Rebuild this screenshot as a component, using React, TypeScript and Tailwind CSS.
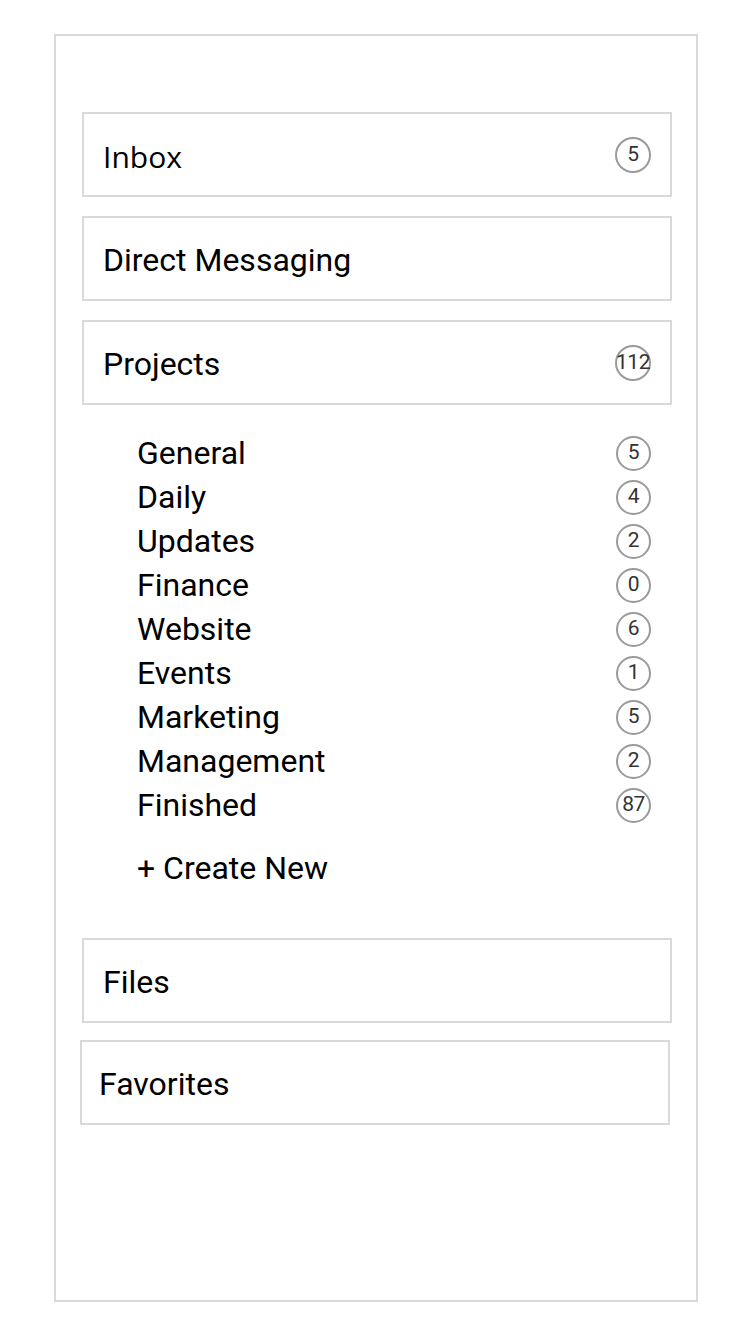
const projects: [string, number][] = [
  ['General', 5],
  ['Daily', 4],
  ['Updates', 2],
  ['Finance', 0],
  ['Website', 6],
  ['Events', 1],
  ['Marketing', 5],
  ['Management', 2],
  ['Finished', 87],
];

function Badge({ n, big = false }: { n: number; big?: boolean }) {
  return (
    <span
      className={`flex items-center justify-center rounded-full border-2 border-[#9a9a9a] text-[#333] tracking-[-0.5px] ${
        big ? 'w-[36px] h-[36px] text-[21px]' : 'w-[35px] h-[35px] text-[21px]'
      }`}
    >
      {n}
    </span>
  );
}

function Section({
  label,
  count,
  font = 'font-["Roboto",sans-serif] text-[32px]',
  shift = false,
}: {
  label: string;
  count?: number;
  font?: string;
  shift?: boolean;
}) {
  return (
    <div
      className={`flex items-center justify-between h-[85px] w-[590px] border-2 border-[#d9d9d9] pr-[19px] ${
        shift ? '-ml-[2px] pl-[17px]' : 'pl-[19px]'
      }`}
    >
      <span className={`pt-[3px] text-black ${font}`}>{label}</span>
      {count !== undefined && (
        <span className="pt-[1px]">
          <Badge n={count} big />
        </span>
      )}
    </div>
  );
}

export default function App() {
  return (
    <div className='min-h-screen bg-white font-["Roboto",sans-serif]'>
      <div className="ml-[54px] pt-[34px]">
        <div className="w-[644px] h-[1268px] border-2 border-[#d9d9d9] pl-[26px] pt-[76px]">
          <div className="flex flex-col gap-[19px]">
            <Section label="Inbox" count={5} font='font-["Open_Sans",sans-serif] text-[30px]' />
            <Section label="Direct Messaging" />
            <Section label="Projects" count={112} />
          </div>

          <ul className="pt-[26px] pl-[55px] w-[590px] pr-[21px]">
            {projects.map(([name, n]) => (
              <li key={name} className="flex items-center justify-between h-[44px]">
                <span className="text-[32px] text-black">{name}</span>
                <Badge n={n} />
              </li>
            ))}
            <li className="flex items-center h-[44px] mt-[19px]">
              <span className="text-[32px] text-black">+ Create New</span>
            </li>
          </ul>

          <div className="mt-[48px]">
            <Section label="Files" />
          </div>
          <div className="mt-[17px]">
            <Section label="Favorites" shift />
          </div>
        </div>
      </div>
    </div>
  );
}
